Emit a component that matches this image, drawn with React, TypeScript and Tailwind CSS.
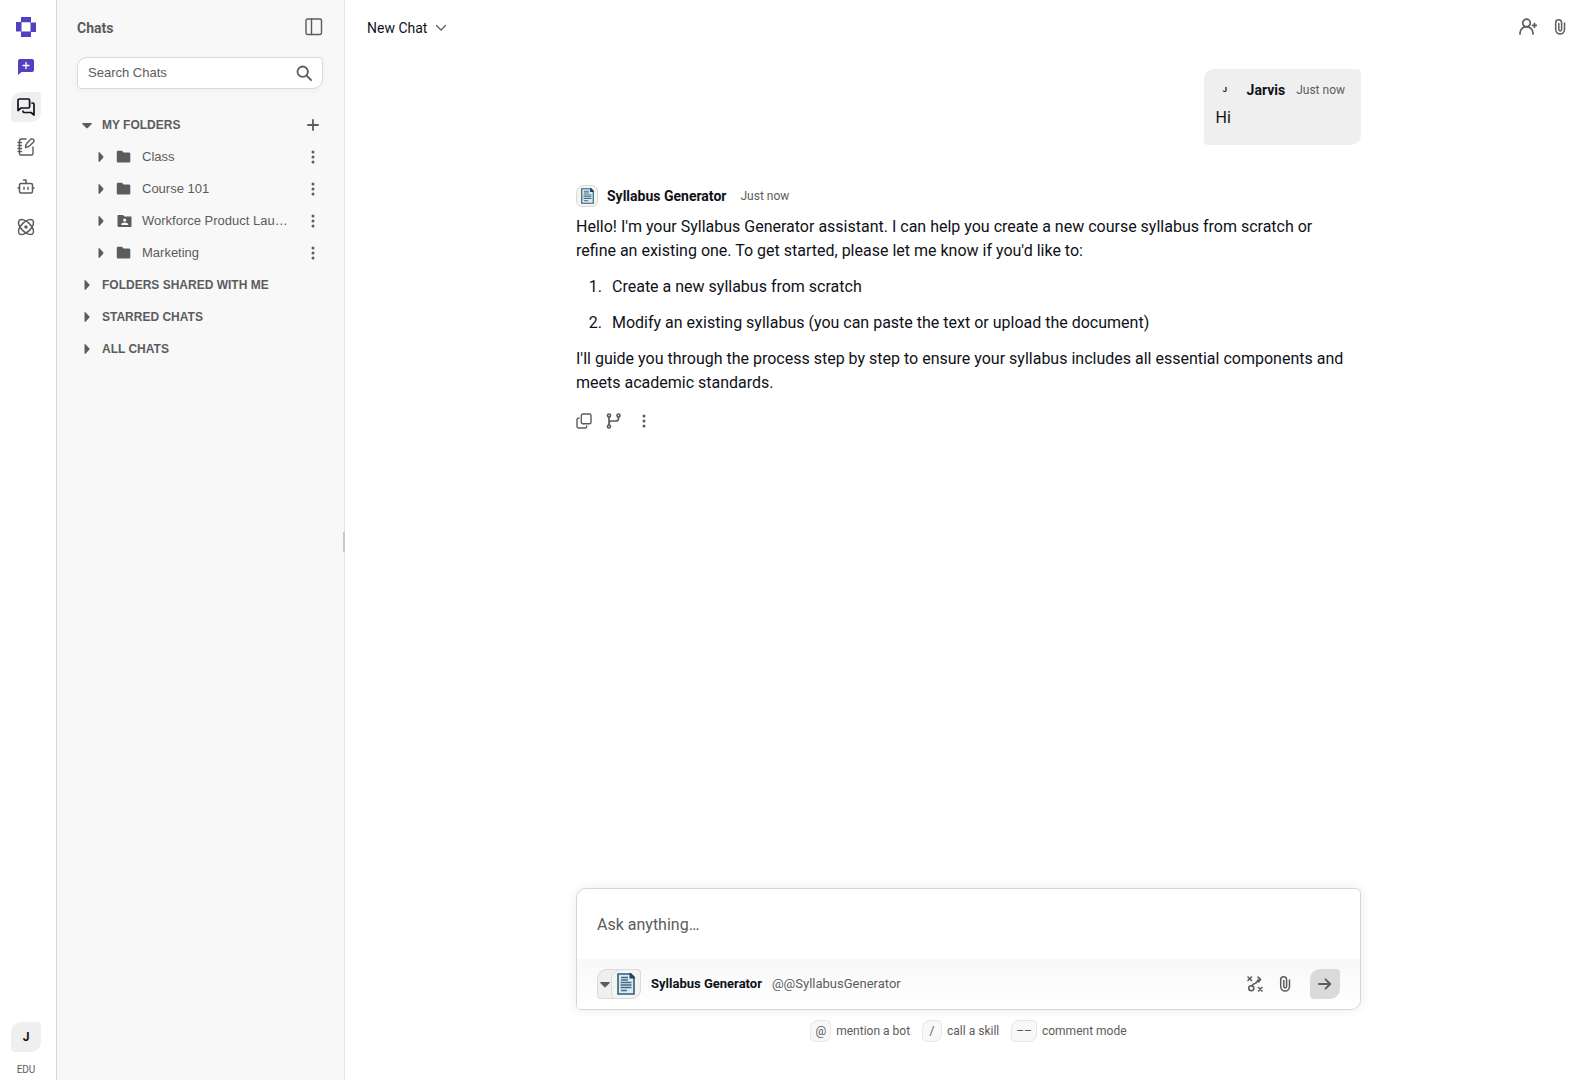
import type { ReactNode } from "react";

interface IconProps {
  className?: string;
}

interface StrokeIconProps extends IconProps {
  size?: number;
  width?: number;
  children: ReactNode;
}

function StrokeIcon({ size = 18, width = 1.5, className = "", children }: StrokeIconProps) {
  return (
    <svg
      width={size}
      height={size}
      viewBox={`0 0 ${size} ${size}`}
      fill="none"
      stroke="currentColor"
      strokeWidth={width}
      strokeLinecap="round"
      strokeLinejoin="round"
      className={`shrink-0 ${className}`}
      aria-hidden="true"
    >
      {children}
    </svg>
  );
}

function LogoIcon() {
  return (
    <svg width="20" height="20" viewBox="0 0 20 20" fill="#5240c2" aria-hidden="true">
      <path
        fillRule="evenodd"
        d="M5 0h10v5.500h5V15h-5v5H5v-5.500H0V5h5zM5.500 5.300v9.200h9V5.300z"
      />
    </svg>
  );
}

function NewChatIcon() {
  return (
    <svg width="18" height="18" viewBox="0 0 18 18" aria-hidden="true">
      <path d="M3 1h12a2 2 0 0 1 2 2v9a2 2 0 0 1-2 2H4.500L1 17V3a2 2 0 0 1 2-2z" fill="#5240c2" />
      <path d="M9 4.500v6M6 7.500h6" stroke="#fff" strokeWidth="1.300" strokeLinecap="round" />
    </svg>
  );
}

function MessagesIcon() {
  return (
    <StrokeIcon width={1.7}>
      <path d="M2.300 1h9a1.300 1.300 0 0 1 1.300 1.300v6.400A1.300 1.300 0 0 1 11.300 10H4l-3 2.500V2.300A1.300 1.300 0 0 1 2.300 1z" />
      <path d="M15 5h.700A1.300 1.300 0 0 1 17 6.300V17l-3-2.500H7.300A1.300 1.300 0 0 1 6 13.200" />
    </StrokeIcon>
  );
}

function NotebookIcon() {
  return (
    <StrokeIcon width={1.4}>
      <path d="M9 1H4A1.500 1.500 0 0 0 2.500 2.500v13A1.500 1.500 0 0 0 4 17h10.500a1.500 1.500 0 0 0 1.500-1.500V9" />
      <path d="M1 4.500h3.500M1 7.500h3.500M1 10.500h3.500M1 13.500h3.500" />
      <path d="M8.500 9.500c0-2.500.5-3.500 1.800-4.800L13.500 1.500c1-1 2.300-.8 3 0s.7 1.800-.2 2.700L13 7.500c-1.200 1.200-2.200 1.800-4.500 2z" />
    </StrokeIcon>
  );
}

function BotIcon() {
  return (
    <StrokeIcon width={1.5}>
      <rect x="2.500" y="5.500" width="13" height="9.500" rx="1.500" />
      <path d="M9 5.500V2H6.500M1 10h1.500M15.500 10H17M7 9.300v2M11 9.300v2" />
    </StrokeIcon>
  );
}

function AtomIcon() {
  return (
    <StrokeIcon width={1.5}>
      <ellipse cx="9" cy="9" rx="9.500" ry="4.800" transform="rotate(45 9 9)" />
      <ellipse cx="9" cy="9" rx="9.500" ry="4.800" transform="rotate(-45 9 9)" />
      <circle cx="9" cy="9" r="1" fill="currentColor" />
    </StrokeIcon>
  );
}

function PanelIcon() {
  return (
    <StrokeIcon width={1.4}>
      <rect x="1" y="1" width="15.500" height="15.500" rx="1.500" />
      <path d="M6.500 1v15.500" />
    </StrokeIcon>
  );
}

function SearchIcon() {
  return (
    <StrokeIcon size={16} width={1.8}>
      <circle cx="6.700" cy="6.700" r="5.200" />
      <path d="M10.600 10.600L15 15" />
    </StrokeIcon>
  );
}

function PlusIcon() {
  return (
    <StrokeIcon size={12} width={1.8}>
      <path d="M6 1v10M1 6h10" />
    </StrokeIcon>
  );
}

function DotsIcon() {
  return (
    <svg width="4" height="14" viewBox="0 0 4 14" fill="currentColor" aria-hidden="true">
      <circle cx="2" cy="2" r="1.500" />
      <circle cx="2" cy="7" r="1.500" />
      <circle cx="2" cy="12" r="1.500" />
    </svg>
  );
}

function CaretRight() {
  return (
    <svg width="10" height="10" viewBox="0 0 10 10" fill="currentColor" className="shrink-0" aria-hidden="true">
      <path d="M2.500 .8c0-.6.600-.9 1-.5L7.200 4.300c.4.400.4 1 0 1.400L3.500 9.700c-.4.400-1 .1-1-.5z" />
    </svg>
  );
}

function CaretDown() {
  return (
    <svg width="10" height="10" viewBox="0 0 10 10" fill="currentColor" className="shrink-0" aria-hidden="true">
      <path d="M.8 3c-.6 0-.9.600-.5 1L4.300 8c.4.400 1 .4 1.400 0L9.700 4c.4-.4.100-1-.5-1z" />
    </svg>
  );
}

function FolderIcon({ shared }: { shared?: boolean }) {
  return (
    <svg width="16" height="14" viewBox="0 0 16 14" fill="currentColor" className="shrink-0" aria-hidden="true">
      {shared ? (
        <path
          fillRule="evenodd"
          d="M2 1h5l1.500 1.500H15.500V13H3a1.500 1.500 0 0 1-1.500-1.500v-10zM8.700 4.500a1.600 1.600 0 1 0 0 3.200 1.600 1.600 0 0 0 0-3.200zM5.200 11h7v-.6c0-1.200-2.300-1.900-3.500-1.900s-3.500.7-3.500 1.900z"
        />
      ) : (
        <path d="M2 .8h4L7.500 2.500H13A1.300 1.300 0 0 1 14.300 3.800v7.400A1.300 1.300 0 0 1 13 12.500H2A1.300 1.300 0 0 1 .8 11.200V2A1.300 1.300 0 0 1 2 .8z" />
      )}
    </svg>
  );
}

function AddUserIcon() {
  return (
    <StrokeIcon size={18} width={1.7}>
      <circle cx="7.500" cy="5" r="3.800" />
      <path d="M1 16v-.8a6.300 6.300 0 0 1 13 0v.8M15.500 5.300v4M13.500 7.300h4" />
    </StrokeIcon>
  );
}

function ClipIcon() {
  return (
    <StrokeIcon size={16} width={1.5}>
      <path d="M12.500 4v6.500a4.300 4.300 0 0 1-8.800 0V3.800a2.900 2.900 0 0 1 5.900 0V10.500a1.400 1.400 0 0 1-2.800 0V4.500" />
    </StrokeIcon>
  );
}

function CopyIcon() {
  return (
    <StrokeIcon size={16} width={1.4}>
      <rect x="5.300" y="1" width="9.700" height="9.700" rx="1.500" />
      <path d="M3 5.300H2.300A1.300 1.300 0 0 0 1 6.600v7A1.400 1.400 0 0 0 2.400 15h7a1.300 1.300 0 0 0 1.300-1.300V13" />
    </StrokeIcon>
  );
}

function BranchIcon() {
  return (
    <StrokeIcon size={16} width={1.7}>
      <circle cx="3" cy="2.500" r="1.500" />
      <circle cx="3" cy="13.500" r="1.500" />
      <circle cx="12.500" cy="2.500" r="1.500" />
      <path d="M3 4v8M12.500 4v1.500A2.500 2.500 0 0 1 10 8H5.500A2.500 2.500 0 0 0 3 10" />
    </StrokeIcon>
  );
}

function StrategyIcon() {
  return (
    <StrokeIcon size={16} width={1.6}>
      <path d="M1 1l3.500 3.500M4.500 1L1 4.500M11.500 11.500L15 15M15 11.500L11.500 15" />
      <circle cx="4.300" cy="12.300" r="2.500" />
      <path d="M5 9.800C5.500 7 9 8.500 10 5.500c.4-1.300 1.200-2 3-2M11 1.200l2.500 2.200L11.500 6" />
    </StrokeIcon>
  );
}

function DocumentIcon({ className = "" }: IconProps) {
  return (
    <svg viewBox="0 0 18 22" className={className} aria-hidden="true">
      <path d="M1 1h12l4 4v16H1z" fill="#dfe9ec" stroke="#315c80" strokeWidth="1.600" />
      <path d="M12.500 0H14l4 4v1.500h-5.500z" fill="#1f4468" />
      <path
        d="M4 4.500h7M4 7h7M3.500 9.500h11M3.500 12h11M3.500 14.500h11M4 17.500h6"
        stroke="#3c6b8e"
        strokeWidth="1.400"
      />
    </svg>
  );
}

function RailItem({ label, active, children }: { label: string; active?: boolean; children: ReactNode }) {
  return (
    <button
      type="button"
      aria-label={label}
      className={`flex size-[30px] items-center justify-center rounded-[4px] rounded-tl-[10px] rounded-br-[10px] ${
        active ? "bg-[#efefef] text-[#0f1117]" : ""
      }`}
    >
      {children}
    </button>
  );
}

const folders = [
  { name: "Class" },
  { name: "Course 101" },
  { name: "Workforce Product Lau…", shared: true },
  { name: "Marketing" }
];

const sections = ["FOLDERS SHARED WITH ME", "STARRED CHATS", "ALL CHATS"];

const hints = [
  { key: "@", text: "mention a bot" },
  { key: "/", text: "call a skill" },
  { key: "––", text: "comment mode" }
];

function Rail() {
  return (
    <nav className="flex w-[57px] shrink-0 flex-col items-center border-r border-[#d9d9d9] bg-white pt-3 pr-1 pb-[3px]">
      <div className="flex flex-col gap-[10px]">
        <RailItem label="Home"><LogoIcon /></RailItem>
        <RailItem label="New chat"><NewChatIcon /></RailItem>
        <RailItem label="Chats" active><MessagesIcon /></RailItem>
        <RailItem label="Prompts"><NotebookIcon /></RailItem>
        <RailItem label="Bots"><BotIcon /></RailItem>
        <RailItem label="Models"><AtomIcon /></RailItem>
      </div>
      <div className="mt-auto flex flex-col items-center gap-[11px]">
        <RailItem label="Account" active>
          <span className="text-xs font-bold">J</span>
        </RailItem>
        <span className="text-[10px] leading-[14px]">EDU</span>
      </div>
    </nav>
  );
}

function Sidebar() {
  return (
    <aside className="flex w-72 shrink-0 flex-col border-r border-[#e6e6e6] bg-[#f8f8f8]">
      <div className="flex h-[57px] items-center justify-between pr-[21px] pb-[2px] pl-5">
        <h2 className="text-sm font-bold">Chats</h2>
        <button type="button" aria-label="Toggle sidebar" className="pb-[2px]"><PanelIcon /></button>
      </div>
      <div className="pr-[21px] pl-5 font-['Liberation_Sans',sans-serif] text-[13px]">
        <div className="flex h-8 items-center rounded-[4px] rounded-tl-[10px] rounded-br-[10px] border border-[#d9d9d9] bg-white px-[10px] shadow-[0_2px_8px_rgba(0,0,0,0.04)]">
          <input
            type="text"
            aria-label="Search chats"
            placeholder="Search Chats"
            className="min-w-0 flex-1 bg-transparent outline-none placeholder:text-[#5c5c5c]"
          />
          <button type="button" aria-label="Search"><SearchIcon /></button>
        </div>
      </div>
      <div className="mt-5 flex flex-col pr-[21px] pl-6 font-['Liberation_Sans',sans-serif] text-[13px]">
        <div className="flex h-8 items-center justify-between pr-1">
          <button type="button" className="flex items-center gap-[10px] pl-[1px] text-xs font-bold">
            <CaretDown />
            MY FOLDERS
          </button>
          <button type="button" aria-label="Add folder"><PlusIcon /></button>
        </div>
        <ul>
          {folders.map((folder) => (
            <li key={folder.name} className="flex h-8 items-center justify-between pr-2 pl-[15px]">
              <button type="button" className="flex items-center">
                <CaretRight />
                <span className="mr-[10px] ml-[10px]"><FolderIcon shared={folder.shared} /></span>
                <span className="whitespace-nowrap">{folder.name}</span>
              </button>
              <button type="button" aria-label={`${folder.name} options`}><DotsIcon /></button>
            </li>
          ))}
        </ul>
        {sections.map((section) => (
          <button key={section} type="button" className="flex h-8 items-center gap-[10px] pl-[1px] text-xs font-bold">
            <CaretRight />
            {section}
          </button>
        ))}
      </div>
    </aside>
  );
}

function Conversation() {
  return (
    <section className="flex flex-1 flex-col">
      <article className="self-end rounded-[4px] rounded-tl-[10px] rounded-br-[10px] bg-[#efefef] pt-[9px] pr-4 pb-[15px] pl-3">
        <header className="flex h-6 items-center">
          <span className="flex w-[18px] justify-center text-[8px] font-bold text-[#0f1117]">J</span>
          <span className="ml-[13px] text-sm font-bold text-[#0f1117]">Jarvis</span>
          <span className="ml-[11px] text-xs">Just now</span>
        </header>
        <p className="mt-1 text-base leading-6 text-[#0f1117]">Hi</p>
      </article>

      <article className="mt-10">
        <header className="flex h-[22px] items-center">
          <span className="flex size-[22px] items-center justify-center rounded-[6px] rounded-tl-[8px] border border-[#dadada] bg-[#f5f5f0]">
            <DocumentIcon className="h-4 w-[13px]" />
          </span>
          <span className="ml-[9px] text-sm font-bold text-[#0f1117]">Syllabus Generator</span>
          <span className="ml-[14px] text-xs">Just now</span>
        </header>
        <div className="mt-2 space-y-3 pr-3 text-base leading-6 text-[#0f1117]">
          <p>
            Hello! I'm your Syllabus Generator assistant. I can help you create a new course syllabus from scratch or
            refine an existing one. To get started, please let me know if you'd like to:
          </p>
          <ol className="list-decimal space-y-3 pl-[30px]">
            <li className="pl-[6px]">Create a new syllabus from scratch</li>
            <li className="pl-[6px]">Modify an existing syllabus (you can paste the text or upload the document)</li>
          </ol>
          <p>
            I'll guide you through the process step by step to ensure your syllabus includes all essential components
            and meets academic standards.
          </p>
        </div>
        <div className="mt-[18px] flex items-center gap-[14px]">
          <button type="button" aria-label="Copy"><CopyIcon /></button>
          <button type="button" aria-label="Branch"><BranchIcon /></button>
          <button type="button" aria-label="More" className="flex w-4 justify-center"><DotsIcon /></button>
        </div>
      </article>
    </section>
  );
}

function Composer() {
  return (
    <form className="rounded-[5px] rounded-tl-[10px] rounded-br-[10px] border border-[#d6d6d6] bg-white shadow-[0_0_12px_rgba(0,0,0,0.08)]">
      <textarea
        aria-label="Message"
        placeholder="Ask anything…"
        rows={1}
        className="block h-[70px] w-full resize-none px-5 pt-6 text-base leading-6 outline-none placeholder:text-[#5c5c5c]"
      />
      <div className="flex h-[50px] items-center rounded-br-[9px] rounded-bl-[4px] bg-linear-to-b from-[#f8f8f8] to-white px-5">
        <button
          type="button"
          aria-label="Choose bot"
          className="flex h-[30px] items-center rounded-[4px] rounded-tl-[10px] rounded-br-[10px] bg-[#efefef] pl-[3px] ring-1 ring-[#dadada] ring-inset"
        >
          <CaretDown />
          <span className="ml-[1px] flex size-[30px] items-center justify-center rounded-[5px] rounded-tl-[10px] rounded-br-[10px] border border-[#dadada] bg-[#f5f5f0]">
            <DocumentIcon className="h-[22px] w-[18px]" />
          </span>
        </button>
        <span className="ml-[10px] text-[13px] font-bold text-[#0f1117]">Syllabus Generator</span>
        <span className="ml-[10px] text-[13px]">@@SyllabusGenerator</span>
        <div className="ml-auto flex items-center">
          <button type="button" aria-label="Skills"><StrategyIcon /></button>
          <button type="button" aria-label="Attach file" className="ml-[14px]"><ClipIcon /></button>
          <button
            type="submit"
            aria-label="Send"
            className="ml-[17px] flex size-[30px] items-center justify-center rounded-[4px] rounded-tl-[10px] rounded-br-[10px] bg-[#dadada]"
          >
            <StrokeIcon size={14} width={1.8}>
              <path d="M1 7h11M7.500 2.300L12.300 7 7.500 11.700" />
            </StrokeIcon>
          </button>
        </div>
      </div>
    </form>
  );
}

export default function App() {
  return (
    <div className="flex h-screen overflow-hidden bg-white font-[Roboto,sans-serif] text-[#5c5c5c]">
      <Rail />
      <Sidebar />
      <main className="relative flex min-w-0 flex-1 flex-col">
        <div className="absolute top-[532px] left-[-2px] h-5 w-[2px] bg-[#c8c8c8]" />
        <header className="flex h-14 shrink-0 items-center justify-between pr-[10px] pl-[22px]">
          <button type="button" className="flex items-center gap-2 text-sm text-[#0f1117]">
            New Chat
            <StrokeIcon size={12} width={1.2} className="text-[#5c5c5c]">
              <path d="M1.500 3.500L6 8l4.500-4.500" />
            </StrokeIcon>
          </button>
          <div className="flex items-center gap-[15px] pb-[2px]">
            <button type="button" aria-label="Add people"><AddUserIcon /></button>
            <button type="button" aria-label="Attachments"><ClipIcon /></button>
          </div>
        </header>
        <div className="flex min-h-0 flex-1 flex-col pt-[13px] pb-[38px] pl-[14px]">
          <div className="mx-auto flex w-full max-w-[785px] flex-1 flex-col">
            <Conversation />
            <Composer />
            <div className="mt-[10px] flex justify-center gap-3 text-xs">
              {hints.map((hint) => (
                <span key={hint.text} className="flex items-center gap-[5px]">
                  <kbd className="flex h-[22px] min-w-5 items-center justify-center rounded-[4px] rounded-tl-[8px] rounded-br-[8px] border border-[#e6e6e6] bg-[#f8f8f8] px-1 font-[Roboto,sans-serif]">
                    {hint.key}
                  </kbd>
                  {hint.text}
                </span>
              ))}
            </div>
          </div>
        </div>
      </main>
    </div>
  );
}
